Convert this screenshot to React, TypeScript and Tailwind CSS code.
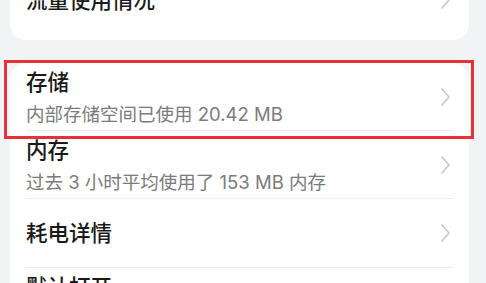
import React from 'react';

const font = { fontFamily: 'Inter, "Noto Sans CJK SC", "Noto Sans", sans-serif' };

function Chevron() {
  return (
    <svg width="11" height="20" viewBox="0 0 11 20" fill="none" className="shrink-0">
      <polyline points="2,2 9,10 2,18" stroke="#c9c9c9" strokeWidth="1.8" strokeLinecap="round" strokeLinejoin="round" />
    </svg>
  );
}

function Row({ title, sub, divider = true, highlight = false }: { title: string; sub?: string; divider?: boolean; highlight?: boolean }) {
  return (
    <div className="relative">
      <div className={`flex items-center justify-between pl-4 pr-[18px] ${sub !== undefined ? 'h-[67px]' : 'h-[68px]'}`}>
        <div className="flex flex-col">
          <span className="text-[21.5px] leading-[30px] font-medium text-[#1a1a1a]">{title}</span>
          {sub !== undefined && <span className="text-[18.5px] leading-[26px] text-[#7b7b7b] mt-[4px]">{sub}</span>}
        </div>
        <Chevron />
      </div>
      {divider && <div className="mx-4 h-px bg-[#ebebeb]" />}
      {highlight && <div className="absolute -top-[3px] -left-[6px] -right-[5px] -bottom-[8px] border-[3px] border-[#e53238]" />}
    </div>
  );
}

export default function App() {
  return (
    <div className="w-[486px] h-[283px] overflow-hidden bg-[#f1f3f5]" style={font}>
      <div className="ml-[10px] w-[459px] -mt-[34px] pb-[6px] bg-white rounded-[16px]">
        <Row title="流量使用情况" divider={false} />
      </div>
      <div className="ml-[10px] w-[459px] mt-[23px] bg-white rounded-t-[16px]">
        <Row title="存储" sub="内部存储空间已使用 20.42 MB" highlight />
        <Row title="内存" sub="过去 3 小时平均使用了 153 MB 内存" />
        <Row title="耗电详情" />
        <Row title="默认打开" sub={'\u00a0'} />
      </div>
    </div>
  );
}
